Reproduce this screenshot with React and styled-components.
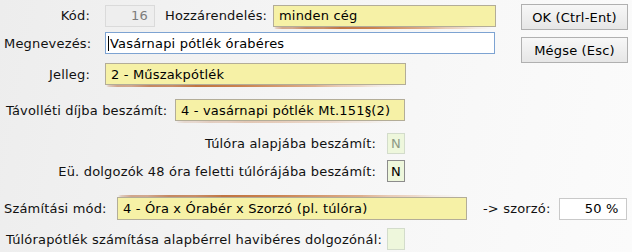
import React from "react";
import styled, { createGlobalStyle, css } from "styled-components";

const Global = createGlobalStyle`
  html, body { margin: 0; padding: 0; }
  body {
    width: 632px; height: 252px; overflow: hidden;
    font-family: "DejaVu Sans", Verdana, sans-serif;
    font-size: 13px; color: #000;
    letter-spacing: 0.18px;
  }
`;

const Page = styled.div`
  box-sizing: border-box;
  width: 632px; height: 252px;
  padding: 0 4px;
  background: linear-gradient(100deg, #ededed 0%, #f6f6f6 55%, #fbfbfb 100%);
  display: flex; flex-direction: column;
`;

const Top = styled.div`
  display: flex;
  justify-content: space-between;
`;

const Left = styled.div`
  display: flex; flex-direction: column;
  width: 500px;
`;

const Buttons = styled.div`
  display: flex; flex-direction: column;
  gap: 7px;
  padding-top: 4px;
`;

const Button = styled.button`
  box-sizing: border-box;
  width: 107px; height: 26px;
  font-family: inherit; font-size: 13px; color: #000;
  letter-spacing: inherit;
  background: linear-gradient(#f7f7f7, #e6e6e6);
  border: 1px solid #b0b0b0;
  border-radius: 0;
  padding: 0;
`;

const Row = styled.div`
  display: flex; align-items: center;
  height: ${(p) => p.$h || 22}px;
  margin-top: ${(p) => p.$mt || 0}px;
`;

const Label = styled.span`
  box-sizing: border-box;
  flex: none;
  width: ${(p) => (p.$w ? `${p.$w}px` : "auto")};
  text-align: ${(p) => p.$align || "left"};
  padding-left: ${(p) => p.$pl || 0}px;
  margin-left: ${(p) => p.$ml || 0}px;
  white-space: nowrap;
  color: #111;
`;

const fieldBase = css`
  box-sizing: border-box;
  flex: none;
  position: relative;
  height: ${(p) => p.$h || 22}px;
  width: ${(p) => p.$w}px;
  margin-left: ${(p) => p.$ml || 0}px;
  display: flex; align-items: center;
  white-space: nowrap;
`;

const glow = (side, strength) => css`
  &::after {
    content: "";
    position: absolute;
    left: 0; right: 0;
    ${side === "top" ? "top: -3px;" : "bottom: -3px;"}
    height: 2px;
    border-radius: 50%;
    opacity: ${strength};
    background: linear-gradient(to right, rgba(170, 80, 25, 0.95) 0%, rgba(195, 110, 50, 0.85) 45%, rgba(215, 150, 100, 0.55) 80%, rgba(230, 200, 170, 0) 100%);
  }
`;

const YellowField = styled.div`
  ${fieldBase};
  background: #f6f1a6;
  border: 1px solid #b3ad98;
  padding-left: 5px;
  ${(p) => p.$glow && glow(p.$glow, p.$strength ?? 1)};
`;

const GrayField = styled.div`
  ${fieldBase};
  background: #eeeeee;
  border: 1px solid #dadada;
  justify-content: flex-end;
  padding-right: 6px;
  color: #7c7c7c;
`;

const WhiteField = styled.div`
  ${fieldBase};
  background: #fff;
  border: 1px solid ${(p) => p.$border || "#c9c9c9"};
  justify-content: ${(p) => (p.$right ? "flex-end" : "flex-start")};
  padding: ${(p) => (p.$right ? "0 7px 0 0" : "0 0 0 2px")};
`;

const Caret = styled.span`
  display: inline-block;
  width: 1px; height: 15px;
  background: #000;
  margin-right: 1px;
`;

const CheckBox = styled.div`
  ${fieldBase};
  width: 18px;
  margin-left: 11px;
  justify-content: center;
  background: #eef7dc;
  border: 1px solid ${(p) => (p.$active ? "#8c8c8c" : "#d3dccb")};
  color: ${(p) => (p.$active ? "#000" : "#8d9a86")};
`;

export default function App() {
  return (
    <>
      <Global />
      <Page>
        <Top>
          <Left>
            <Row $mt={4} $h={23}>
              <Label $w={86} $align="right">Kód:</Label>
              <GrayField $w={50} $ml={15}>16</GrayField>
              <Label $w={108} $ml={10}>Hozzárendelés:</Label>
              <YellowField $w={223} $glow="bottom">minden cég</YellowField>
            </Row>
            <Row $mt={5}>
              <Label $w={86} $align="right">Megnevezés:</Label>
              <WhiteField $w={390} $ml={15} $border="#7da3d2">
                <Caret />
                Vasárnapi pótlék órabéres
              </WhiteField>
            </Row>
            <Row $mt={9}>
              <Label $w={86} $align="right">Jelleg:</Label>
              <YellowField $w={301} $ml={15} $glow="bottom">2 - Műszakpótlék</YellowField>
            </Row>
            <Row $mt={14}>
              <Label $w={171} $pl={2}>Távolléti díjba beszámít:</Label>
              <YellowField $w={230} $glow="bottom" $strength={0.35}>4 - vasárnapi pótlék Mt.151§(2)</YellowField>
            </Row>
            <Row $mt={12} $h={21}>
              <Label $w={372} $align="right">Túlóra alapjába beszámít:</Label>
              <CheckBox $h={21}>N</CheckBox>
            </Row>
            <Row $mt={6}>
              <Label $w={372} $align="right">Eü. dolgozók 48 óra feletti túlórájába beszámít:</Label>
              <CheckBox $active>N</CheckBox>
            </Row>
          </Left>
          <Buttons>
            <Button>OK (Ctrl-Ent)</Button>
            <Button>Mégse (Esc)</Button>
          </Buttons>
        </Top>
        <Row $mt={15} $h={23}>
          <Label $w={113}>Számítási mód:</Label>
          <YellowField $w={350} $h={23} $glow="top">4 - Óra x Órabér x Szorzó (pl. túlóra)</YellowField>
          <Label $ml={16}>-&gt; szorzó:</Label>
          <WhiteField $w={68} $ml={8} $right>50 %</WhiteField>
        </Row>
        <Row $mt={8}>
          <Label $w={372} $align="right" $pl={2}>Túlórapótlék számítása alapbérrel havibéres dolgozónál:</Label>
          <CheckBox />
        </Row>
      </Page>
    </>
  );
}
